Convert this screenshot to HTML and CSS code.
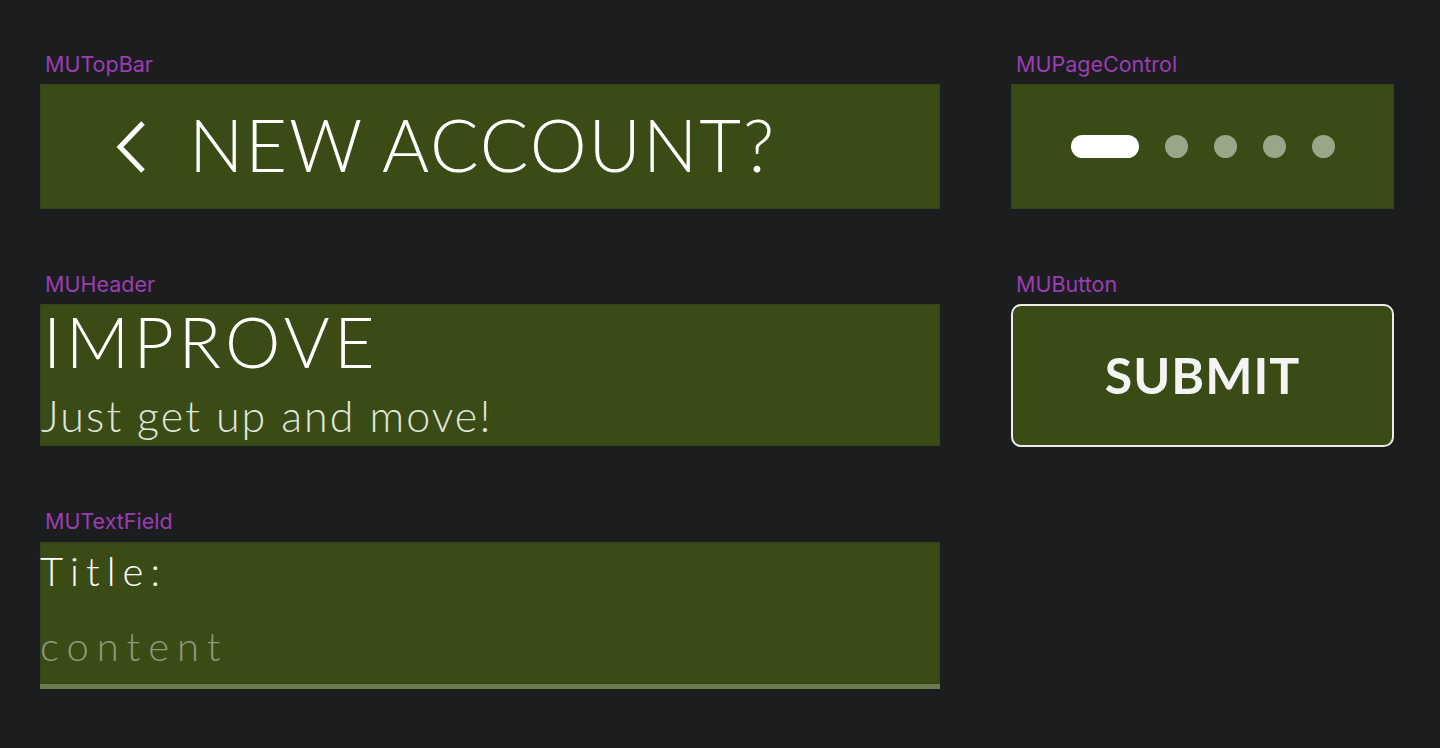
FILE: index.html
```html
<!DOCTYPE html>
<html>
<head>
<meta charset="utf-8">
<link rel="stylesheet" href="styles.css">
</head>
<body>
<main class="canvas">
  <section class="col col-left">
    <div class="comp">
      <div class="label">MUTopBar</div>
      <div class="box topbar">
        <svg class="chev" width="34" height="54" viewBox="0 0 34 54"><path d="M28 3 L5 27 L28 51" fill="none" stroke="#fff" stroke-width="5"/></svg>
        <span class="topbar-title">NEW ACCOUNT?</span>
      </div>
    </div>
    <div class="comp">
      <div class="label">MUHeader</div>
      <div class="box header">
        <div class="header-title">IMPROVE</div>
        <div class="header-sub">Just get up and move!</div>
      </div>
    </div>
    <div class="comp">
      <div class="label">MUTextField</div>
      <div class="box textfield">
        <div class="tf-title">Title:</div>
        <div class="tf-content">content</div>
      </div>
    </div>
  </section>
  <section class="col col-right">
    <div class="comp">
      <div class="label">MUPageControl</div>
      <div class="box pager">
        <span class="pill"></span>
        <span class="dot"></span>
        <span class="dot"></span>
        <span class="dot"></span>
        <span class="dot"></span>
      </div>
    </div>
    <div class="comp">
      <div class="label">MUButton</div>
      <div class="button">SUBMIT</div>
    </div>
  </section>
</main>
</body>
</html>
```
FILE: styles.css
```css
html, body {
  margin: 0;
  padding: 0;
  background: #1c1d1f;
  height: 100%;
}
.canvas {
  display: flex;
  gap: 71px;
  padding: 52px 0 0 40px;
  font-family: Lato, "Open Sans", sans-serif;
}
.col {
  display: flex;
  flex-direction: column;
  gap: 63px;
}
.col-left { width: 900px; }
.col-right { width: 383px; }
.label {
  font-family: Inter, "Noto Sans", sans-serif;
  font-size: 21.5px;
  line-height: 24px;
  height: 32px;
  color: #9b3db3;
  padding-left: 5px;
  box-sizing: border-box;
}
.box {
  background: #3b4b15;
  box-shadow: inset 0 0 0 1px #34431a;
}
.topbar {
  height: 125px;
  display: flex;
  align-items: center;
  padding-left: 75px;
  box-sizing: border-box;
}
.chev { display: block; margin-right: 40px; }
.topbar-title {
  color: #fff;
  font-size: 72px;
  font-weight: 300;
  letter-spacing: 2px;
  line-height: 1;
  margin-bottom: 5px;
}
.header {
  height: 142px;
  box-sizing: border-box;
  padding: 0 0 0 3px;
  color: #fff;
}
.header-title {
  font-size: 70px;
  font-weight: 300;
  line-height: 74px;
  letter-spacing: 4.4px;
}
.header-sub {
  font-size: 43px;
  font-weight: 300;
  line-height: 48px;
  color: #dfe6dc;
  letter-spacing: 2.1px;
  margin-left: -2px;
  margin-top: 14px;
}
.comp-tf { }
.textfield {
  height: 147px;
  box-sizing: border-box;
  border-bottom: 5px solid #6b7a4f;
  padding-top: 5px;
  margin-top: 1px;
}
.tf-title {
  color: #fff;
  font-size: 40px;
  font-weight: 300;
  letter-spacing: 7px;
  line-height: 48px;
}
.tf-content {
  color: #8d9a7c;
  font-size: 40px;
  font-weight: 300;
  letter-spacing: 8px;
  line-height: 48px;
  margin-top: 27px;
}
.pager {
  height: 125px;
  display: flex;
  align-items: center;
  justify-content: center;
  gap: 26px;
  padding-left: 1px;
  box-sizing: border-box;
}
.pill {
  width: 68px;
  height: 23px;
  border-radius: 12px;
  background: #fff;
}
.dot {
  width: 23px;
  height: 23px;
  border-radius: 50%;
  background: #9aa68a;
}
.button {
  height: 143px;
  box-sizing: border-box;
  background: #3b4b15;
  border: 2px solid #ececec;
  border-radius: 10px;
  display: flex;
  align-items: center;
  justify-content: center;
  color: #f4f4f4;
  font-size: 50px;
  font-weight: 700;
  letter-spacing: 1px;
  padding-bottom: 1px;
}
```
